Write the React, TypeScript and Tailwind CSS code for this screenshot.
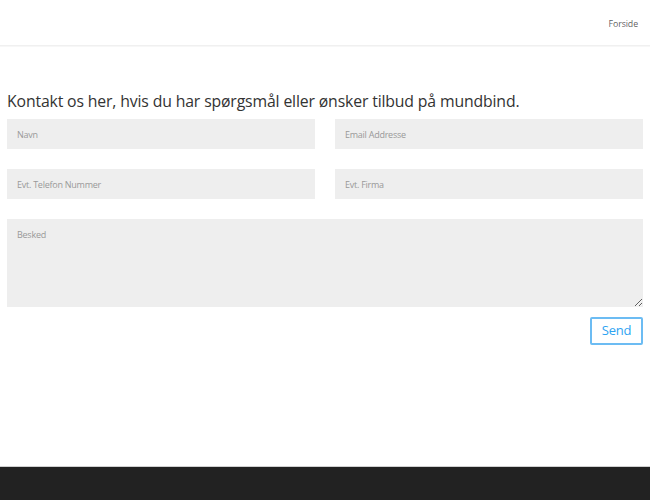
export default function App() {
    const field =
        'h-[30px] w-full bg-[#eeeeee] px-[10px] text-[9px] tracking-[-0.25px] text-[#4e4e4e] outline-none placeholder:text-[#999999]';

    return (
        <div className="flex min-h-[500px] flex-col bg-white font-['Open_Sans',sans-serif] text-[#666666]">
            {/* header */}
            <header className="flex h-[46px] items-center justify-end border-b border-[#f0f0f0] px-[12px] pb-[3px] shadow-[0_1px_0_rgba(0,0,0,0.03)]">
                <nav>
                    <a href="#" className="text-[8.8px] tracking-[-0.1px] text-[#333333]/80">Forside</a>
                </nav>
            </header>

            {/* contact form */}
            <main className="flex-1 px-[7px] pt-[45px]">
                <h2 className="mb-[8px] text-[15.8px] leading-[20px] tracking-[-0.15px] text-[#333333]">
                    Kontakt os her, hvis du har spørgsmål eller ønsker tilbud på mundbind.
                </h2>
                <form className="flex flex-col gap-[20px]" onSubmit={(e) => e.preventDefault()}>
                    <div className="grid grid-cols-2 gap-x-[20px] gap-y-[20px]">
                        <input className={field} placeholder="Navn" />
                        <input className={field} placeholder="Email Addresse" />
                        <input className={field} placeholder="Evt. Telefon Nummer" />
                        <input className={field} placeholder="Evt. Firma" />
                    </div>
                    <div className="flex flex-col gap-[10px]">
                        <textarea
                            className="block h-[88px] w-full bg-[#eeeeee] px-[10px] pt-[9px] text-[9px] tracking-[-0.25px] text-[#4e4e4e] outline-none placeholder:text-[#999999]"
                            placeholder="Besked"
                        />
                        <div className="flex justify-end">
                            <button
                                type="submit"
                                className="h-[28px] w-[53px] rounded-[2px] border-2 border-[#6cbcf3] text-[13px] tracking-[-0.2px] text-[#2ea3f2]"
                            >
                                Send
                            </button>
                        </div>
                    </div>
                </form>
            </main>

            {/* footer */}
            <footer className="h-[34px] border-t border-[#d0d0d0] bg-[#222222]" />
        </div>
    );
}
